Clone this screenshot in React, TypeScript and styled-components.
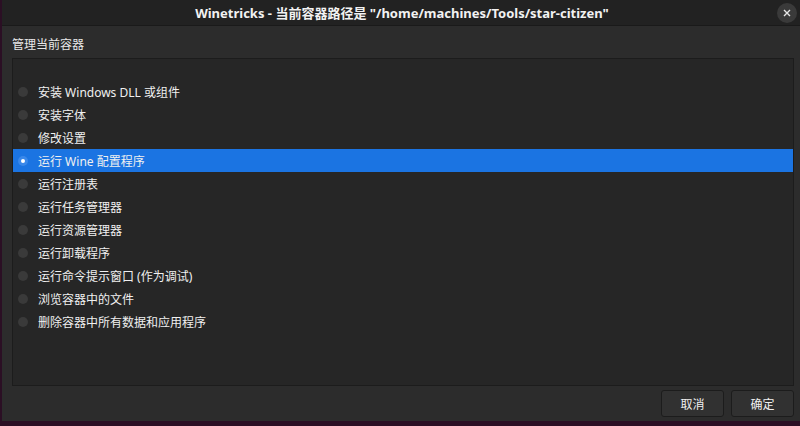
import React from "react";
import styled, { createGlobalStyle } from "styled-components";

const Global = createGlobalStyle`
  html, body { margin: 0; padding: 0; background: #2a0d22; }
  body { font-family: "Noto Sans", "Noto Sans CJK SC", sans-serif; }
  * { box-sizing: border-box; }
`;

const Desktop = styled.div`
  width: 800px;
  height: 426px;
  background: #2b0f24;
  padding: 0 0 5px 2px;
  display: flex;
`;

const Window = styled.div`
  flex: 1;
  display: flex;
  flex-direction: column;
  background: #2c2c2c;
  color: #ffffff;
`;

const TitleBar = styled.div`
  height: 26px;
  flex: none;
  background: #222222;
  border-bottom: 1px solid #1a1a1a;
  display: flex;
  align-items: center;
  justify-content: center;
  position: relative;
  font-size: 13px;
  font-weight: 700;
  color: #f2f2f2;
  padding-left: 2px;
`;

const CloseButton = styled.div`
  position: absolute;
  right: 3px;
  top: 3px;
  width: 20px;
  height: 20px;
  border-radius: 50%;
  background: #3a3a3a;
  display: flex;
  align-items: center;
  justify-content: center;
`;

const Body = styled.div`
  flex: 1;
  display: flex;
  flex-direction: column;
  padding: 11px 6px 4px 10px;
`;

const Label = styled.div`
  font-size: 12px;
  line-height: 16px;
  color: #e8e8e8;
  margin-bottom: 5px;
`;

const ListFrame = styled.div`
  height: 328px;
  border: 1px solid #1c1c1c;
  background: #262626;
  display: flex;
  flex-direction: column;
`;

const Header = styled.div`
  height: 21px;
  flex: none;
`;

const Row = styled.div<{ $selected?: boolean }>`
  height: 23px;
  display: flex;
  align-items: center;
  padding-left: 5px;
  gap: 10px;
  font-size: 12px;
  color: #f0f0f0;
  background: ${(p) => (p.$selected ? "#1b74e2" : "transparent")};
`;

const Radio = styled.span<{ $checked?: boolean }>`
  width: 10px;
  height: 10px;
  border-radius: 50%;
  background: ${(p) => (p.$checked ? "#3a88ea" : "#3a3a3a")};
  display: flex;
  align-items: center;
  justify-content: center;
  flex: none;
  &::after {
    content: "";
    width: 4px;
    height: 4px;
    border-radius: 50%;
    background: ${(p) => (p.$checked ? "#ffffff" : "transparent")};
  }
`;

const Footer = styled.div`
  display: flex;
  justify-content: flex-end;
  gap: 7px;
  margin-top: 4px;
`;

const Button = styled.button`
  width: 63px;
  height: 27px;
  background: #313131;
  border: 1px solid #1c1c1c;
  border-radius: 3px;
  color: #f0f0f0;
  font-family: "Noto Sans CJK SC", sans-serif;
  font-size: 12px;
`;

const items = [
  "安装 Windows DLL 或组件",
  "安装字体",
  "修改设置",
  "运行 Wine 配置程序",
  "运行注册表",
  "运行任务管理器",
  "运行资源管理器",
  "运行卸载程序",
  "运行命令提示窗口 (作为调试)",
  "浏览容器中的文件",
  "删除容器中所有数据和应用程序",
];

export default function App() {
  return (
    <>
      <Global />
      <Desktop>
        <Window>
          <TitleBar>
            Winetricks - 当前容器路径是 "/home/machines/Tools/star-citizen"
            <CloseButton>
              <svg width="8" height="8" viewBox="0 0 8 8">
                <path d="M1 1L7 7M7 1L1 7" stroke="#e6e6e6" strokeWidth="1.4" />
              </svg>
            </CloseButton>
          </TitleBar>
          <Body>
            <Label>管理当前容器</Label>
            <ListFrame>
              <Header />
              {items.map((t, i) => (
                <Row key={t} $selected={i === 3}>
                  <Radio $checked={i === 3} />
                  {t}
                </Row>
              ))}
            </ListFrame>
            <Footer>
              <Button>取消</Button>
              <Button>确定</Button>
            </Footer>
          </Body>
        </Window>
      </Desktop>
    </>
  );
}
